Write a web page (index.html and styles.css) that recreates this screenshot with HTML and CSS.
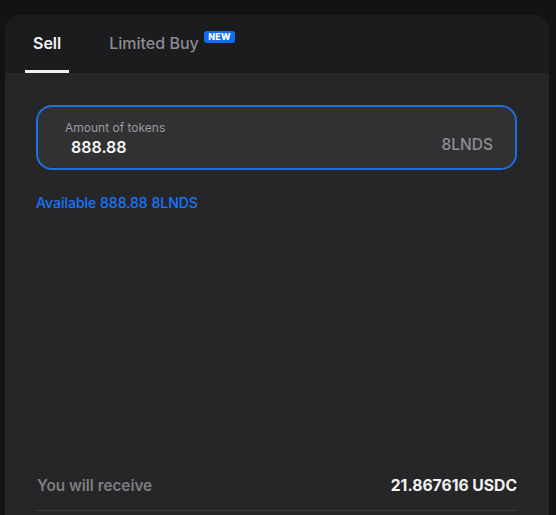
FILE: index.html
```html
<!DOCTYPE html>
<html>
<head>
<meta charset="utf-8">
<link rel="stylesheet" href="styles.css">
</head>
<body>
<div class="card">
  <div class="tabs">
    <div class="tab active">Sell</div>
    <div class="tab">Limited Buy<span class="badge">NEW</span></div>
  </div>
  <div class="content">
    <div class="field">
      <div class="field-main">
        <div class="label">Amount of tokens</div>
        <div class="value">888.88</div>
      </div>
      <div class="unit">8LNDS</div>
    </div>
    <div class="available">Available 888.88 8LNDS</div>
    <div class="receive">
      <span class="receive-label">You will receive</span>
      <span class="receive-value">21.867616 USDC</span>
    </div>
  </div>
</div>
</body>
</html>
```
FILE: styles.css
```css
* { box-sizing: border-box; }
html, body { margin: 0; padding: 0; }
body {
  background: #131315;
  font-family: Inter, "Noto Sans", sans-serif;
  height: 515px;
  overflow: hidden;
}
.card {
  margin: 15px 0 0 5px;
  width: 544px;
  height: 520px;
  border-radius: 16px 16px 0 0;
  overflow: hidden;
  background: #262628;
  display: flex;
  flex-direction: column;
}
.tabs {
  height: 58px;
  background: #1c1c1e;
  display: flex;
  padding-left: 20px;
  gap: 32px;
}
.tab {
  position: relative;
  padding: 18px 8px 0;
  font-size: 16px;
  font-weight: 500;
  color: #8b8b90;
  height: 58px;
}
.tab.active {
  color: #f4f4f5;
  font-weight: 600;
}
.tab.active::after {
  content: "";
  position: absolute;
  left: 0;
  right: 0;
  bottom: 0;
  height: 3px;
  background: #f2f2f2;
}
.badge {
  position: absolute;
  top: 16px;
  right: -28px;
  background: #0d6ef3;
  color: #fff;
  font-size: 9px;
  font-weight: 800;
  line-height: 12px;
  padding: 0 4px;
  border-radius: 3px;
  letter-spacing: 0.2px;
}
.content {
  flex: 1;
  padding: 32px 32px 0 31px;
  display: flex;
  flex-direction: column;
}
.field {
  height: 65px;
  border: 2px solid #1f6fdc;
  border-radius: 16px;
  background: #313133;
  display: flex;
  align-items: center;
  padding: 0 22px 0 27px;
}
.field-main {
  flex: 1;
  padding-top: 2px;
}
.label {
  font-size: 12px;
  color: #9a9a9e;
  line-height: 15px;
}
.value {
  font-size: 16px;
  font-weight: 600;
  color: #f5f5f5;
  line-height: 22px;
  padding-left: 6px;
  margin-top: 1px;
}
.unit {
  font-size: 15.5px;
  font-weight: 500;
  color: #8e8e93;
  padding-top: 14px;
}
.available {
  margin-top: 24px;
  font-size: 14px;
  font-weight: 500;
  color: #1676ff;
}
.receive {
  margin-top: 265px;
  display: flex;
  justify-content: space-between;
  align-items: center;
  padding: 0 0 15px 1px;
  border-bottom: 1px solid #3a3a3d;
}
.receive-label {
  font-size: 15.3px;
  font-weight: 600;
  color: #7d7d80;
}
.receive-value {
  font-size: 15.7px;
  font-weight: 700;
  color: #f2f2f2;
}
```
